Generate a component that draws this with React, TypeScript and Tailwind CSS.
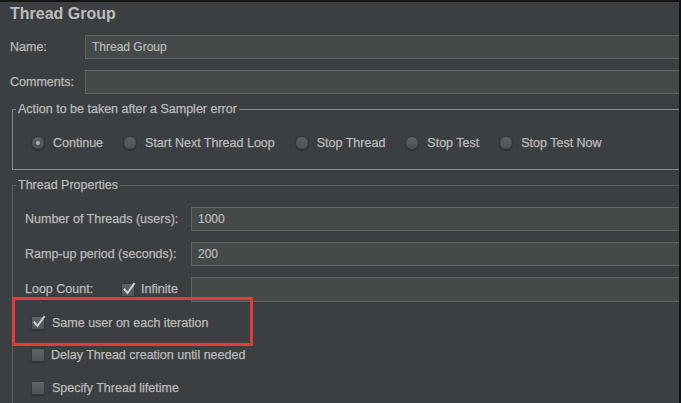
import React from "react";

const font = { fontFamily: '"Liberation Sans", Arial, sans-serif' };

function Radio({ checked }: { checked?: boolean }) {
  return (
    <span className="relative flex h-[14px] w-[14px] shrink-0 items-center justify-center rounded-full border border-[#2e3032] bg-gradient-to-b from-[#5f6366] to-[#4a4e51] shadow-[0_1px_0_#2a2c2e]">
      {checked && <span className="h-[4px] w-[4px] rounded-full bg-[#a8a8a8]" />}
    </span>
  );
}

function Checkbox({ checked }: { checked?: boolean }) {
  return (
    <span className="relative flex h-[14px] w-[14px] shrink-0 items-center justify-center rounded-[2px] border border-[#36393b] bg-gradient-to-b from-[#606467] to-[#4f5356] shadow-[0_1px_0_#2a2c2e]">
      {checked && (
        <svg width="14" height="14" viewBox="0 0 14 14" className="absolute left-[0px] top-[-2px]">
          <path d="M2.5 7.5 L5.5 11 L12 2" fill="none" stroke="#cfcfcf" strokeWidth="2" strokeLinecap="square" />
        </svg>
      )}
    </span>
  );
}

function Field({ value, h = 24 }: { value?: string; h?: number }) {
  return (
    <div
      className="flex flex-1 items-center border border-r-0 border-[#646464] bg-[#45494a] pl-[6px] text-[12px] text-[#bbbbbb] [-webkit-text-stroke:0.2px_#bbbbbb]"
      style={{ height: h }}
    >
      {value}
    </div>
  );
}

export default function App() {
  return (
    <div
      className="relative h-[403px] w-[681px] overflow-hidden border-t-2 border-r-2 border-[#141414] bg-[#3c3f41] text-[12.5px] text-[#bbbbbb] [-webkit-text-stroke:0.25px_#bbbbbb]"
      style={font}
    >
      <div className="flex h-[24px] items-center pl-[10px] text-[16px] font-bold leading-[18px] text-[#bdbdbd] [-webkit-text-stroke:0px]">
        Thread Group
      </div>

      <div className="mt-[9px] flex items-center pl-[10px]">
        <div className="w-[75px]">Name:</div>
        <Field value="Thread Group" />
      </div>
      <div className="mt-[11px] flex items-center pl-[10px]">
        <div className="w-[75px]">Comments:</div>
        <Field />
      </div>

      <fieldset className="ml-[12px] mt-[8px] border border-r-0 border-[#8c8c8c] pb-[16px] pt-[16px]">
        <legend className="ml-[3px] px-[2px] leading-[15px]">Action to be taken after a Sampler error</legend>
        <div className="flex h-[20px] items-center gap-[20px] pl-[18px]">
          {[
            ["Continue", true],
            ["Start Next Thread Loop", false],
            ["Stop Thread", false],
            ["Stop Test", false],
            ["Stop Test Now", false],
          ].map(([label, checked]) => (
            <div key={label as string} className="flex items-center gap-[8px]">
              <Radio checked={checked as boolean} />
              <span>{label}</span>
            </div>
          ))}
        </div>
      </fieldset>

      <fieldset className="ml-[12px] mt-[8px] h-[300px] border border-r-0 border-b-0 border-[#5c5e60] pt-[14px]">
        <legend className="ml-[3px] px-[2px] leading-[15px]">Thread Properties</legend>
        <div className="flex items-center pl-[12px]">
          <div className="w-[166px]">Number of Threads (users):</div>
          <Field value="1000" />
        </div>
        <div className="mt-[11px] flex items-center pl-[12px]">
          <div className="w-[166px]">Ramp-up period (seconds):</div>
          <Field value="200" />
        </div>
        <div className="mt-[11px] flex items-center pl-[12px]">
          <div className="w-[96px]">Loop Count:</div>
          <div className="flex w-[70px] items-center gap-[6px]">
            <Checkbox checked />
            <span>Infinite</span>
          </div>
          <Field h={25} />
        </div>
        <div className="mt-[11px] flex h-[20px] items-center gap-[7px] pl-[18px]">
          <Checkbox checked />
          <span>Same user on each iteration</span>
        </div>
        <div className="mt-[12px] flex h-[20px] items-center gap-[6px] pl-[18px]">
          <Checkbox />
          <span>Delay Thread creation until needed</span>
        </div>
        <div className="mt-[13px] flex h-[20px] items-center gap-[7px] pl-[18px]">
          <Checkbox />
          <span>Specify Thread lifetime</span>
        </div>
      </fieldset>

      <div className="pointer-events-none absolute left-[12px] top-[295px] h-[49px] w-[241px] border-[3px] border-[#e53a3a]" />
    </div>
  );
}
